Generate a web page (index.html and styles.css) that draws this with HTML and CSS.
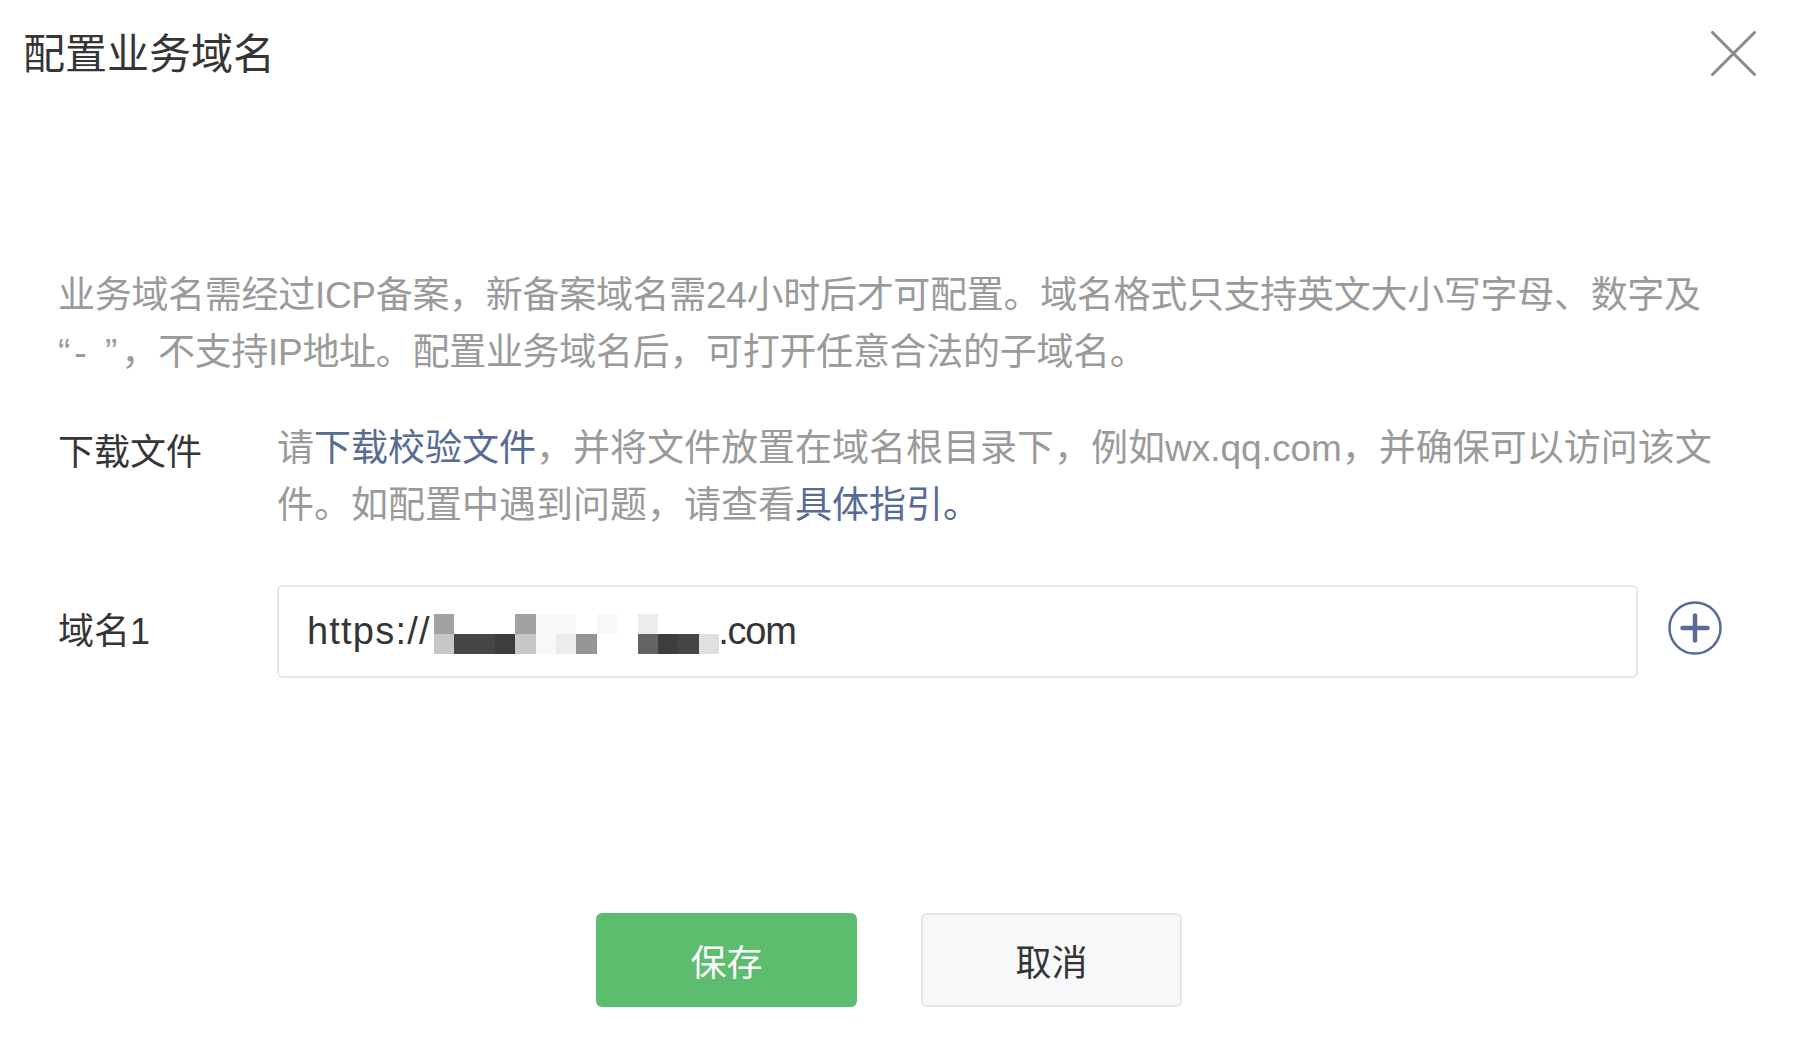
FILE: index.html
```html
<!DOCTYPE html>
<html lang="zh-CN">
<head>
<meta charset="utf-8">
<title>配置业务域名</title>
<link rel="stylesheet" href="styles.css">
</head>
<body>
<div class="dialog">
  <div class="header">
    <h1 class="title">配置业务域名</h1>
    <button class="close" aria-label="关闭">
      <svg width="45" height="45" viewBox="0 0 45 45"><path d="M1.5 1.5 L43.5 43.5 M43.5 1.5 L1.5 43.5" stroke="#8a8a8a" stroke-width="3" stroke-linecap="round" fill="none"/></svg>
    </button>
  </div>
  <div class="body">
    <p class="desc">业务域名需经过ICP备案，新备案域名需24小时后才可配置。域名格式只支持英文大小写字母、数字及<br><span class="quote">“- ”</span>，不支持IP地址。配置业务域名后，可打开任意合法的子域名。</p>
    <div class="row">
      <div class="label label-dl">下载文件</div>
      <p class="tip">请<a class="link">下载校验文件</a>，并将文件放置在域名根目录下，例如wx.qq.com，并确保可以访问该文<br>件。如配置中遇到问题，请查看<a class="link">具体指引。</a></p>
    </div>
    <div class="row row-input">
      <div class="label">域名1</div>
      <div class="field">
        <div class="input"><span class="proto">https://</span><span class="mosaic"><i class="g1"></i><i class="g2"></i><i class="w"></i><i class="d1"></i><i class="w"></i><i class="d1"></i><i class="w"></i><i class="d2"></i><i class="g1"></i><i class="g2"></i><i class="l1"></i><i class="l1"></i><i class="l1"></i><i class="l2"></i><i class="w"></i><i class="m1"></i><i class="l1"></i><i class="w"></i><i class="w"></i><i class="w"></i><i class="l2"></i><i class="m2"></i><i class="w"></i><i class="d2"></i><i class="w"></i><i class="d1"></i><i class="w"></i><i class="l3"></i></span><span class="tld">.com</span></div>
        <button class="add" aria-label="添加">
          <svg width="54" height="54" viewBox="0 0 54 54"><circle cx="27" cy="27" r="25.5" stroke="#576b95" stroke-width="2.5" fill="none"/><path d="M14.5 27 H39.5 M27 14.5 V39.5" stroke="#576b95" stroke-width="4.5" stroke-linecap="round"/></svg>
        </button>
      </div>
    </div>
    <div class="actions">
      <button class="btn btn-primary">保存</button>
      <button class="btn btn-default">取消</button>
    </div>
  </div>
</div>
</body>
</html>
```

FILE: styles.css
```css
* { box-sizing: border-box; }
html, body { margin: 0; padding: 0; background: #fff; }
body {
  font-family: "Liberation Sans", "Noto Sans CJK SC", sans-serif;
  color: #353535;
  width: 1812px;
  height: 1062px;
  overflow: hidden;
}
.dialog { width: 1812px; }
.header {
  display: flex;
  justify-content: space-between;
  align-items: flex-start;
  padding: 27px 56px 0 23px;
}
.title {
  margin: 0;
  font-size: 42px;
  font-weight: normal;
  line-height: 56px;
  color: #353535;
}
.close {
  margin-top: 4px;
  padding: 0;
  border: 0;
  background: none;
  width: 45px;
  height: 45px;
  display: block;
}
.close svg { display: block; }
.body {
  padding: 184px 92px 0 58px;
}
.desc {
  margin: 0;
  font-size: 37px;
  line-height: 57px;
  letter-spacing: -0.3px;
  color: #9a9a9a;
  white-space: nowrap;
}
.quote { letter-spacing: 4px; }
.row {
  display: grid;
  grid-template-columns: 219px 1fr;
  align-items: start;
}
.desc + .row { margin-top: 39px; }
.label {
  font-size: 36px;
  line-height: 57px;
  color: #353535;
}
.label-dl { padding-top: 4px; }
.tip {
  margin: 0;
  font-size: 37px;
  line-height: 57px;
  color: #9a9a9a;
  white-space: nowrap;
}
.link { color: #576b95; text-decoration: none; }
.row-input {
  margin-top: 51px;
  align-items: center;
}
.field {
  display: flex;
  align-items: center;
  gap: 30px;
}
.input {
  width: 1361px;
  height: 93px;
  border: 2px solid #e4e7eb;
  border-radius: 6px;
  padding-left: 28px;
  display: flex;
  align-items: center;
  font-size: 38px;
  color: #353535;
  white-space: nowrap;
}
.proto { letter-spacing: 1.2px; }
.tld { letter-spacing: -1.2px; margin-left: -2px; }
.mosaic {
  display: inline-grid;
  grid-template-rows: 20px 20px;
  grid-auto-flow: column;
  grid-auto-columns: 20.4px;
  margin: 0 1px 0 3px;
  position: relative;
  top: 2px;
}
.mosaic i { display: block; }
.mosaic .w { background: #ffffff; }
.mosaic .g1 { background: #a2a2a2; }
.mosaic .g2 { background: #c7c7c7; }
.mosaic .d1 { background: #454545; }
.mosaic .d2 { background: #3c3d3e; }
.mosaic .l1 { background: #f7f8f9; }
.mosaic .l2 { background: #ebecec; }
.mosaic .m1 { background: #959595; }
.mosaic .m2 { background: #636363; }
.mosaic .l3 { background: #e0e0e0; }
.add {
  padding: 0;
  border: 0;
  background: none;
  width: 54px;
  height: 54px;
  margin-top: -8px;
}
.add svg { display: block; }
.actions {
  display: flex;
  justify-content: center;
  gap: 64px;
  margin-top: 235px;
}
.btn {
  width: 261px;
  height: 94px;
  border-radius: 6px;
  font-family: "Liberation Sans", "Noto Sans CJK SC", sans-serif;
  font-size: 36px;
  padding: 0;
}
.btn-primary {
  background: #5bbd6d;
  border: 0;
  color: #fff;
}
.btn-default {
  background: #f7f8fa;
  border: 2px solid #e3e6ea;
  color: #353535;
}
```
